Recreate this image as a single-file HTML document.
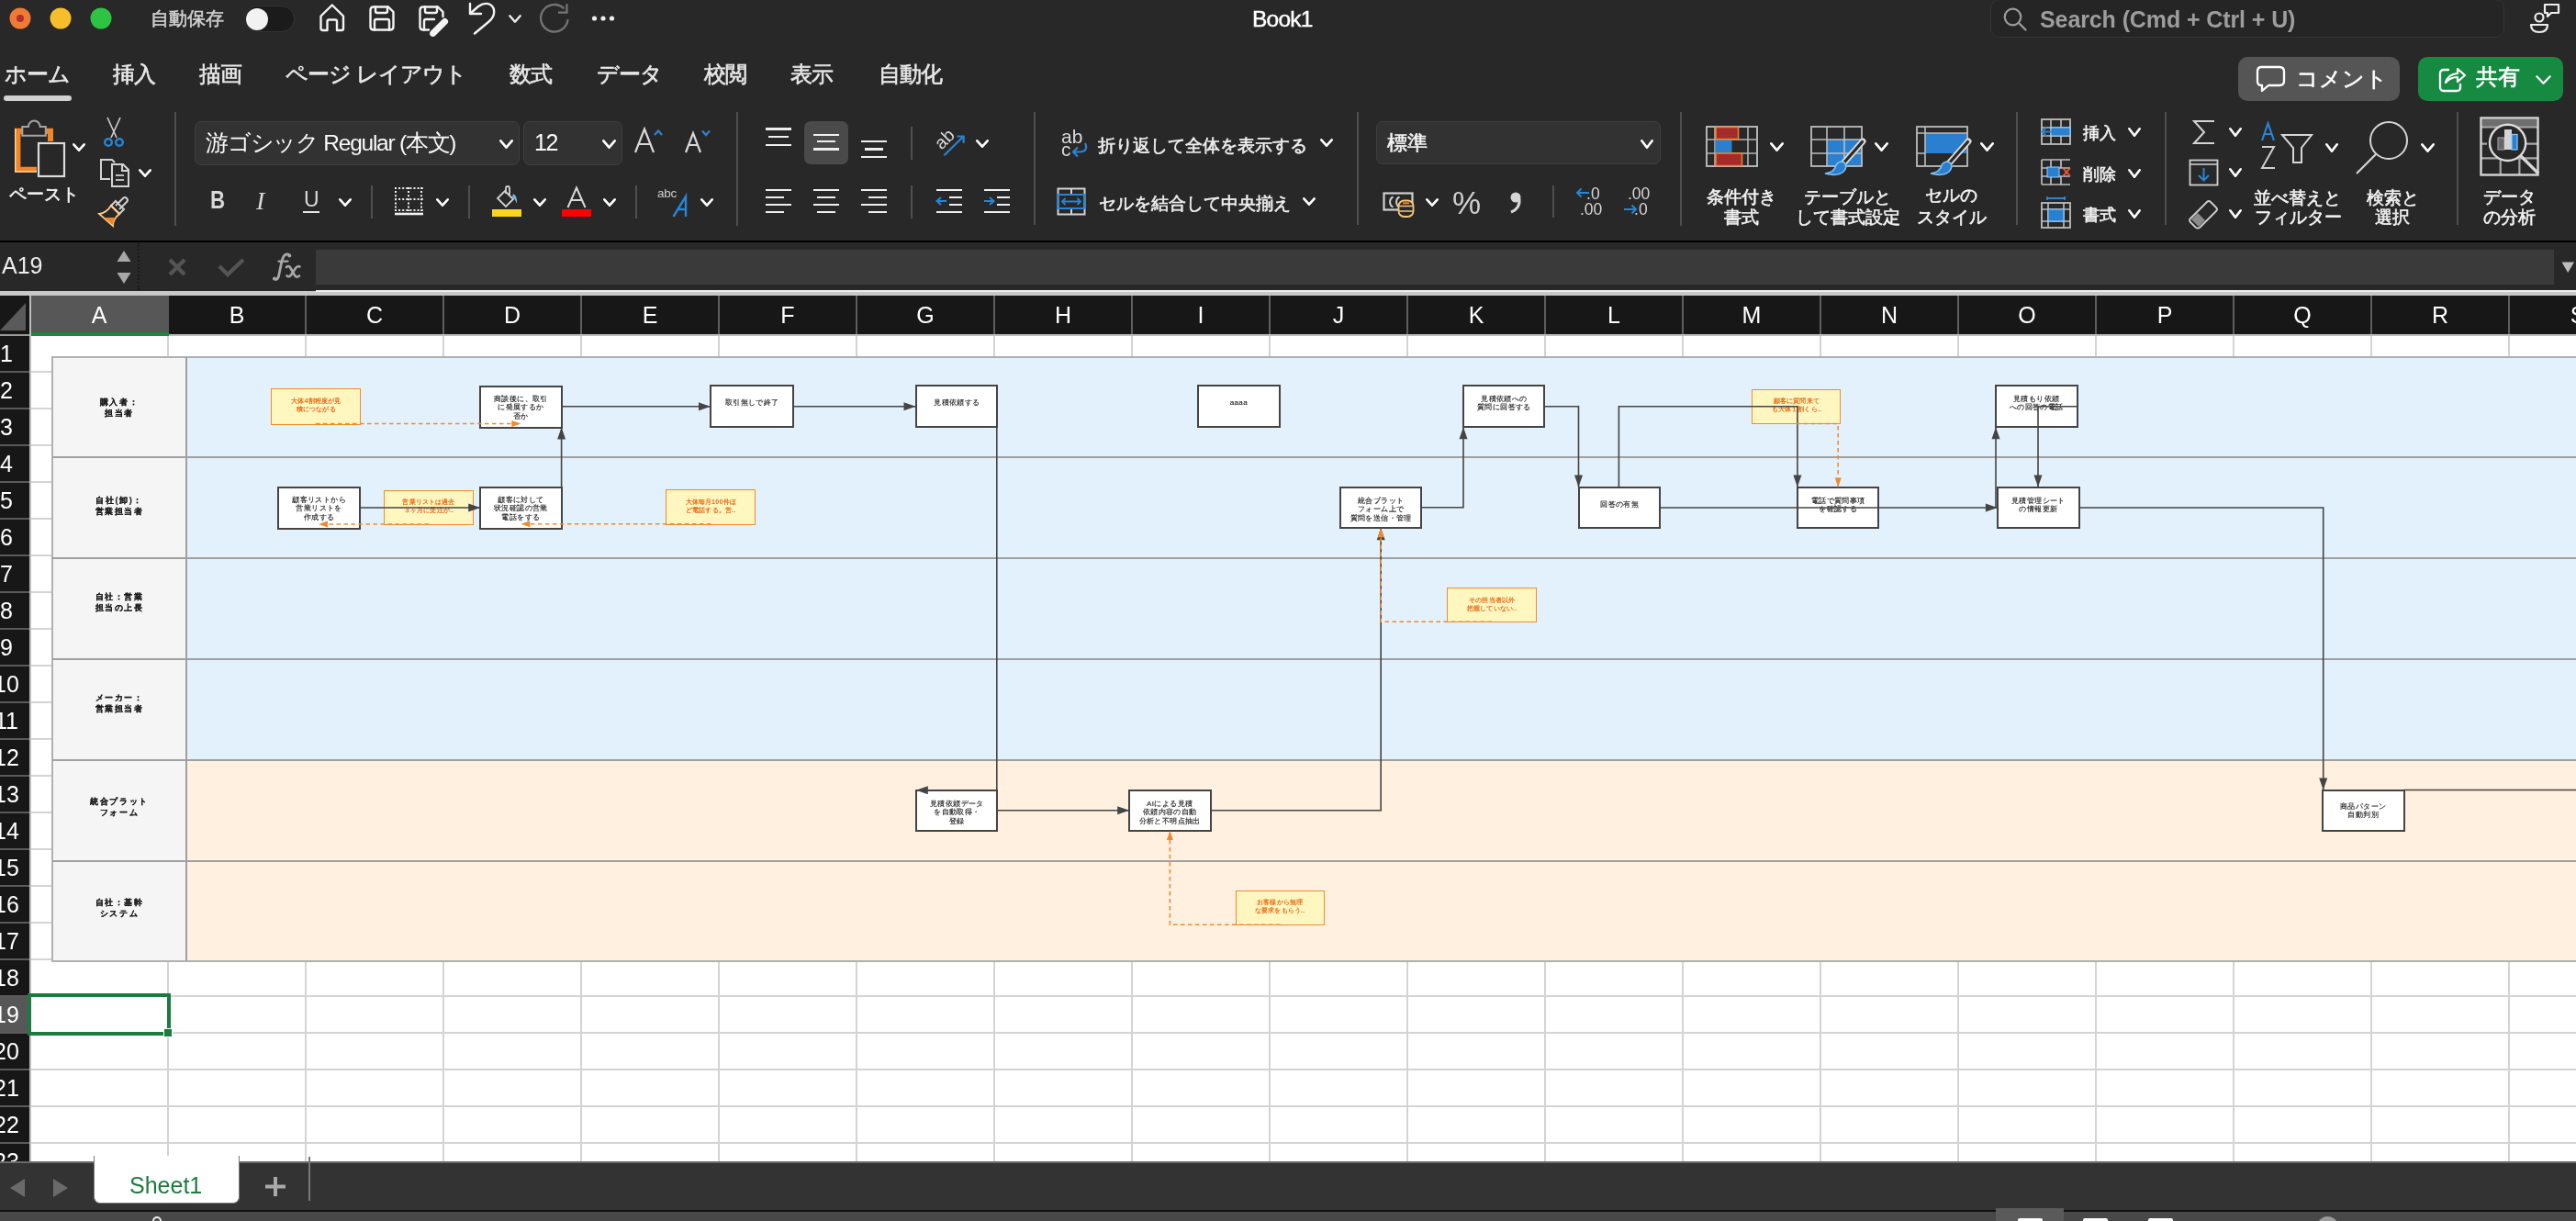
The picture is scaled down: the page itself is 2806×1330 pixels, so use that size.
<!DOCTYPE html><html lang="ja"><head><meta charset="utf-8"><style>
*{box-sizing:border-box}
body{margin:0;width:2806px;height:1330px;overflow:hidden;background:#282828;position:relative;font-family:"Liberation Sans",sans-serif;color:#eee}
.a{position:absolute}
.t{position:absolute;white-space:nowrap;line-height:1;will-change:transform}
svg{position:absolute;overflow:visible}
</style></head><body>
<div class="a" style="left:0;top:262px;width:2806px;height:2px;background:#000"></div>
<div class="a" style="left:344px;top:272px;width:2438px;height:38px;background:#3a3a3a"></div>
<div class="a" style="left:0;top:317px;width:2806px;height:5px;background:#c8c8c8"></div>
<div class="a" style="left:344px;top:316px;width:2462px;height:2px;background:#eee"></div>
<div class="a" style="left:0;top:322px;width:2806px;height:42px;background:#171717"></div>
<div class="a" style="left:34px;top:322px;width:150px;height:42px;background:#575757"></div>
<div class="a" style="left:34px;top:364px;width:2772px;height:2px;background:#bdbdbd"></div>
<div class="a" style="left:0;top:364px;width:34px;height:2px;background:#999"></div>
<div class="a" style="left:34px;top:362px;width:150px;height:4px;background:#178a3e"></div>
<svg style="left:0;top:330px" width="28" height="30"><polygon points="28,0 28,30 0,30" fill="#5a5a5a"/></svg>
<div class="a" style="left:34px;top:366px;width:2772px;height:900px;background:#fff"></div>
<div class="a" style="left:0;top:366px;width:32px;height:900px;background:#171717"></div>
<div class="a" style="left:32px;top:322px;width:2px;height:944px;background:#bdbdbd"></div>
<div class="a" style="left:0;top:1086px;width:32px;height:38px;background:#575757"></div>
<div class="a" style="left:182px;top:366px;width:2px;height:900px;background:#d4d4d4"></div>
<div class="a" style="left:332px;top:322px;width:2px;height:42px;background:#5e5e5e"></div>
<div class="a" style="left:332px;top:366px;width:2px;height:900px;background:#d4d4d4"></div>
<div class="a" style="left:482px;top:322px;width:2px;height:42px;background:#5e5e5e"></div>
<div class="a" style="left:482px;top:366px;width:2px;height:900px;background:#d4d4d4"></div>
<div class="a" style="left:632px;top:322px;width:2px;height:42px;background:#5e5e5e"></div>
<div class="a" style="left:632px;top:366px;width:2px;height:900px;background:#d4d4d4"></div>
<div class="a" style="left:782px;top:322px;width:2px;height:42px;background:#5e5e5e"></div>
<div class="a" style="left:782px;top:366px;width:2px;height:900px;background:#d4d4d4"></div>
<div class="a" style="left:932px;top:322px;width:2px;height:42px;background:#5e5e5e"></div>
<div class="a" style="left:932px;top:366px;width:2px;height:900px;background:#d4d4d4"></div>
<div class="a" style="left:1082px;top:322px;width:2px;height:42px;background:#5e5e5e"></div>
<div class="a" style="left:1082px;top:366px;width:2px;height:900px;background:#d4d4d4"></div>
<div class="a" style="left:1232px;top:322px;width:2px;height:42px;background:#5e5e5e"></div>
<div class="a" style="left:1232px;top:366px;width:2px;height:900px;background:#d4d4d4"></div>
<div class="a" style="left:1382px;top:322px;width:2px;height:42px;background:#5e5e5e"></div>
<div class="a" style="left:1382px;top:366px;width:2px;height:900px;background:#d4d4d4"></div>
<div class="a" style="left:1532px;top:322px;width:2px;height:42px;background:#5e5e5e"></div>
<div class="a" style="left:1532px;top:366px;width:2px;height:900px;background:#d4d4d4"></div>
<div class="a" style="left:1682px;top:322px;width:2px;height:42px;background:#5e5e5e"></div>
<div class="a" style="left:1682px;top:366px;width:2px;height:900px;background:#d4d4d4"></div>
<div class="a" style="left:1832px;top:322px;width:2px;height:42px;background:#5e5e5e"></div>
<div class="a" style="left:1832px;top:366px;width:2px;height:900px;background:#d4d4d4"></div>
<div class="a" style="left:1982px;top:322px;width:2px;height:42px;background:#5e5e5e"></div>
<div class="a" style="left:1982px;top:366px;width:2px;height:900px;background:#d4d4d4"></div>
<div class="a" style="left:2132px;top:322px;width:2px;height:42px;background:#5e5e5e"></div>
<div class="a" style="left:2132px;top:366px;width:2px;height:900px;background:#d4d4d4"></div>
<div class="a" style="left:2282px;top:322px;width:2px;height:42px;background:#5e5e5e"></div>
<div class="a" style="left:2282px;top:366px;width:2px;height:900px;background:#d4d4d4"></div>
<div class="a" style="left:2432px;top:322px;width:2px;height:42px;background:#5e5e5e"></div>
<div class="a" style="left:2432px;top:366px;width:2px;height:900px;background:#d4d4d4"></div>
<div class="a" style="left:2582px;top:322px;width:2px;height:42px;background:#5e5e5e"></div>
<div class="a" style="left:2582px;top:366px;width:2px;height:900px;background:#d4d4d4"></div>
<div class="a" style="left:2732px;top:322px;width:2px;height:42px;background:#5e5e5e"></div>
<div class="a" style="left:2732px;top:366px;width:2px;height:900px;background:#d4d4d4"></div>
<div class="a" style="left:34px;top:404px;width:2772px;height:2px;background:#d4d4d4"></div>
<div class="a" style="left:0;top:404px;width:32px;height:2px;background:#5a5a5a"></div>
<div class="a" style="left:34px;top:444px;width:2772px;height:2px;background:#d4d4d4"></div>
<div class="a" style="left:0;top:444px;width:32px;height:2px;background:#5a5a5a"></div>
<div class="a" style="left:34px;top:484px;width:2772px;height:2px;background:#d4d4d4"></div>
<div class="a" style="left:0;top:484px;width:32px;height:2px;background:#5a5a5a"></div>
<div class="a" style="left:34px;top:524px;width:2772px;height:2px;background:#d4d4d4"></div>
<div class="a" style="left:0;top:524px;width:32px;height:2px;background:#5a5a5a"></div>
<div class="a" style="left:34px;top:564px;width:2772px;height:2px;background:#d4d4d4"></div>
<div class="a" style="left:0;top:564px;width:32px;height:2px;background:#5a5a5a"></div>
<div class="a" style="left:34px;top:604px;width:2772px;height:2px;background:#d4d4d4"></div>
<div class="a" style="left:0;top:604px;width:32px;height:2px;background:#5a5a5a"></div>
<div class="a" style="left:34px;top:644px;width:2772px;height:2px;background:#d4d4d4"></div>
<div class="a" style="left:0;top:644px;width:32px;height:2px;background:#5a5a5a"></div>
<div class="a" style="left:34px;top:684px;width:2772px;height:2px;background:#d4d4d4"></div>
<div class="a" style="left:0;top:684px;width:32px;height:2px;background:#5a5a5a"></div>
<div class="a" style="left:34px;top:724px;width:2772px;height:2px;background:#d4d4d4"></div>
<div class="a" style="left:0;top:724px;width:32px;height:2px;background:#5a5a5a"></div>
<div class="a" style="left:34px;top:764px;width:2772px;height:2px;background:#d4d4d4"></div>
<div class="a" style="left:0;top:764px;width:32px;height:2px;background:#5a5a5a"></div>
<div class="a" style="left:34px;top:804px;width:2772px;height:2px;background:#d4d4d4"></div>
<div class="a" style="left:0;top:804px;width:32px;height:2px;background:#5a5a5a"></div>
<div class="a" style="left:34px;top:844px;width:2772px;height:2px;background:#d4d4d4"></div>
<div class="a" style="left:0;top:844px;width:32px;height:2px;background:#5a5a5a"></div>
<div class="a" style="left:34px;top:884px;width:2772px;height:2px;background:#d4d4d4"></div>
<div class="a" style="left:0;top:884px;width:32px;height:2px;background:#5a5a5a"></div>
<div class="a" style="left:34px;top:924px;width:2772px;height:2px;background:#d4d4d4"></div>
<div class="a" style="left:0;top:924px;width:32px;height:2px;background:#5a5a5a"></div>
<div class="a" style="left:34px;top:964px;width:2772px;height:2px;background:#d4d4d4"></div>
<div class="a" style="left:0;top:964px;width:32px;height:2px;background:#5a5a5a"></div>
<div class="a" style="left:34px;top:1004px;width:2772px;height:2px;background:#d4d4d4"></div>
<div class="a" style="left:0;top:1004px;width:32px;height:2px;background:#5a5a5a"></div>
<div class="a" style="left:34px;top:1044px;width:2772px;height:2px;background:#d4d4d4"></div>
<div class="a" style="left:0;top:1044px;width:32px;height:2px;background:#5a5a5a"></div>
<div class="a" style="left:34px;top:1084px;width:2772px;height:2px;background:#d4d4d4"></div>
<div class="a" style="left:0;top:1084px;width:32px;height:2px;background:#5a5a5a"></div>
<div class="a" style="left:34px;top:1124px;width:2772px;height:2px;background:#d4d4d4"></div>
<div class="a" style="left:0;top:1124px;width:32px;height:2px;background:#5a5a5a"></div>
<div class="a" style="left:34px;top:1164px;width:2772px;height:2px;background:#d4d4d4"></div>
<div class="a" style="left:0;top:1164px;width:32px;height:2px;background:#5a5a5a"></div>
<div class="a" style="left:34px;top:1204px;width:2772px;height:2px;background:#d4d4d4"></div>
<div class="a" style="left:0;top:1204px;width:32px;height:2px;background:#5a5a5a"></div>
<div class="a" style="left:34px;top:1244px;width:2772px;height:2px;background:#d4d4d4"></div>
<div class="a" style="left:0;top:1244px;width:32px;height:2px;background:#5a5a5a"></div>
<div class="t" style="left:68px;width:80px;text-align:center;top:331px;font-size:25px;color:#fff">A</div>
<div class="t" style="left:218px;width:80px;text-align:center;top:331px;font-size:25px;color:#fff">B</div>
<div class="t" style="left:368px;width:80px;text-align:center;top:331px;font-size:25px;color:#fff">C</div>
<div class="t" style="left:518px;width:80px;text-align:center;top:331px;font-size:25px;color:#fff">D</div>
<div class="t" style="left:668px;width:80px;text-align:center;top:331px;font-size:25px;color:#fff">E</div>
<div class="t" style="left:818px;width:80px;text-align:center;top:331px;font-size:25px;color:#fff">F</div>
<div class="t" style="left:968px;width:80px;text-align:center;top:331px;font-size:25px;color:#fff">G</div>
<div class="t" style="left:1118px;width:80px;text-align:center;top:331px;font-size:25px;color:#fff">H</div>
<div class="t" style="left:1268px;width:80px;text-align:center;top:331px;font-size:25px;color:#fff">I</div>
<div class="t" style="left:1418px;width:80px;text-align:center;top:331px;font-size:25px;color:#fff">J</div>
<div class="t" style="left:1568px;width:80px;text-align:center;top:331px;font-size:25px;color:#fff">K</div>
<div class="t" style="left:1718px;width:80px;text-align:center;top:331px;font-size:25px;color:#fff">L</div>
<div class="t" style="left:1868px;width:80px;text-align:center;top:331px;font-size:25px;color:#fff">M</div>
<div class="t" style="left:2018px;width:80px;text-align:center;top:331px;font-size:25px;color:#fff">N</div>
<div class="t" style="left:2168px;width:80px;text-align:center;top:331px;font-size:25px;color:#fff">O</div>
<div class="t" style="left:2318px;width:80px;text-align:center;top:331px;font-size:25px;color:#fff">P</div>
<div class="t" style="left:2468px;width:80px;text-align:center;top:331px;font-size:25px;color:#fff">Q</div>
<div class="t" style="left:2618px;width:80px;text-align:center;top:331px;font-size:25px;color:#fff">R</div>
<div class="t" style="left:2768px;width:80px;text-align:center;top:331px;font-size:25px;color:#fff">S</div>
<div class="t" style="left:-33px;width:80px;text-align:center;top:372.5px;font-size:25px;color:#fff">1</div>
<div class="t" style="left:-33px;width:80px;text-align:center;top:412.5px;font-size:25px;color:#fff">2</div>
<div class="t" style="left:-33px;width:80px;text-align:center;top:452.5px;font-size:25px;color:#fff">3</div>
<div class="t" style="left:-33px;width:80px;text-align:center;top:492.5px;font-size:25px;color:#fff">4</div>
<div class="t" style="left:-33px;width:80px;text-align:center;top:532.5px;font-size:25px;color:#fff">5</div>
<div class="t" style="left:-33px;width:80px;text-align:center;top:572.5px;font-size:25px;color:#fff">6</div>
<div class="t" style="left:-33px;width:80px;text-align:center;top:612.5px;font-size:25px;color:#fff">7</div>
<div class="t" style="left:-33px;width:80px;text-align:center;top:652.5px;font-size:25px;color:#fff">8</div>
<div class="t" style="left:-33px;width:80px;text-align:center;top:692.5px;font-size:25px;color:#fff">9</div>
<div class="t" style="left:-33px;width:80px;text-align:center;top:732.5px;font-size:25px;color:#fff">10</div>
<div class="t" style="left:-33px;width:80px;text-align:center;top:772.5px;font-size:25px;color:#fff">11</div>
<div class="t" style="left:-33px;width:80px;text-align:center;top:812.5px;font-size:25px;color:#fff">12</div>
<div class="t" style="left:-33px;width:80px;text-align:center;top:852.5px;font-size:25px;color:#fff">13</div>
<div class="t" style="left:-33px;width:80px;text-align:center;top:892.5px;font-size:25px;color:#fff">14</div>
<div class="t" style="left:-33px;width:80px;text-align:center;top:932.5px;font-size:25px;color:#fff">15</div>
<div class="t" style="left:-33px;width:80px;text-align:center;top:972.5px;font-size:25px;color:#fff">16</div>
<div class="t" style="left:-33px;width:80px;text-align:center;top:1012.5px;font-size:25px;color:#fff">17</div>
<div class="t" style="left:-33px;width:80px;text-align:center;top:1052.5px;font-size:25px;color:#fff">18</div>
<div class="t" style="left:-33px;width:80px;text-align:center;top:1092.5px;font-size:25px;color:#fff">19</div>
<div class="t" style="left:-33px;width:80px;text-align:center;top:1132.5px;font-size:25px;color:#fff">20</div>
<div class="t" style="left:-33px;width:80px;text-align:center;top:1172.5px;font-size:25px;color:#fff">21</div>
<div class="t" style="left:-33px;width:80px;text-align:center;top:1212.5px;font-size:25px;color:#fff">22</div>
<div class="t" style="left:-33px;width:80px;text-align:center;top:1252.5px;font-size:25px;color:#fff">23</div>
<div class="a" style="left:56.5px;top:388.6px;width:2749.5px;height:658.8000000000001px;background:#f5f5f5"></div>
<div class="a" style="left:203px;top:388.6px;width:2603px;height:109.79999999999995px;background:#e3f1fc"></div>
<div class="a" style="left:203px;top:498.4px;width:2603px;height:109.80000000000007px;background:#e3f1fc"></div>
<div class="a" style="left:203px;top:608.2px;width:2603px;height:109.79999999999995px;background:#e3f1fc"></div>
<div class="a" style="left:203px;top:718px;width:2603px;height:109.79999999999995px;background:#e3f1fc"></div>
<div class="a" style="left:203px;top:827.8px;width:2603px;height:109.80000000000007px;background:#fff0df"></div>
<div class="a" style="left:203px;top:937.6px;width:2603px;height:109.80000000000007px;background:#fff0df"></div>
<div class="a" style="left:55.5px;top:387.6px;width:2750.5px;height:660.8000000000001px;border:2px solid #b0b0b0;border-right:none"></div>
<div class="a" style="left:56.5px;top:497.4px;width:2749.5px;height:2px;background:#a0a0a0"></div>
<div class="a" style="left:56.5px;top:607.2px;width:2749.5px;height:2px;background:#a0a0a0"></div>
<div class="a" style="left:56.5px;top:717px;width:2749.5px;height:2px;background:#a0a0a0"></div>
<div class="a" style="left:56.5px;top:826.8px;width:2749.5px;height:2px;background:#a0a0a0"></div>
<div class="a" style="left:56.5px;top:936.6px;width:2749.5px;height:2px;background:#a0a0a0"></div>
<div class="a" style="left:202px;top:388.6px;width:2px;height:658.8000000000001px;background:#a0a0a0"></div>
<div class="t" style="left:56.5px;width:146.1px;top:431.7px;text-align:center;font-size:9.1px;line-height:12px;font-weight:bold;color:#1a1a1a;letter-spacing:1.6px;-webkit-text-stroke:0.12px #1a1a1a">購入者：<br>担当者</div>
<div class="t" style="left:56.5px;width:146.1px;top:539.0px;text-align:center;font-size:9.1px;line-height:12px;font-weight:bold;color:#1a1a1a;letter-spacing:1.6px;-webkit-text-stroke:0.12px #1a1a1a">自社(卸)：<br>営業担当者</div>
<div class="t" style="left:56.5px;width:146.1px;top:644.3000000000001px;text-align:center;font-size:9.1px;line-height:12px;font-weight:bold;color:#1a1a1a;letter-spacing:1.6px;-webkit-text-stroke:0.12px #1a1a1a">自社：営業<br>担当の上長</div>
<div class="t" style="left:56.5px;width:146.1px;top:754.1px;text-align:center;font-size:9.1px;line-height:12px;font-weight:bold;color:#1a1a1a;letter-spacing:1.6px;-webkit-text-stroke:0.12px #1a1a1a">メーカー：<br>営業担当者</div>
<div class="t" style="left:56.5px;width:146.1px;top:866.9000000000001px;text-align:center;font-size:9.1px;line-height:12px;font-weight:bold;color:#1a1a1a;letter-spacing:1.6px;-webkit-text-stroke:0.12px #1a1a1a">統合プラット<br>フォーム</div>
<div class="t" style="left:56.5px;width:146.1px;top:977.4000000000001px;text-align:center;font-size:9.1px;line-height:12px;font-weight:bold;color:#1a1a1a;letter-spacing:1.6px;-webkit-text-stroke:0.12px #1a1a1a">自社：基幹<br>システム</div>
<div class="a" style="left:522.2px;top:419.5px;width:90.89999999999998px;height:47.0px;background:#fff;border:2px solid #444"></div>
<div class="t" style="left:513.2px;width:108.89999999999998px;top:430.4px;text-align:center;font-size:8px;line-height:9.3px;color:#222;letter-spacing:0.4px;-webkit-text-stroke:0.15px #222">商談後に、取引<br>に発展するか<br>否か</div>
<div class="a" style="left:773.1px;top:419.2px;width:92.29999999999995px;height:47.19999999999999px;background:#fff;border:2px solid #444"></div>
<div class="t" style="left:764.1px;width:110.29999999999995px;top:434.2px;text-align:center;font-size:8px;line-height:9.3px;color:#222;letter-spacing:0.4px;-webkit-text-stroke:0.15px #222">取引無しで終了</div>
<div class="a" style="left:996.5px;top:419.2px;width:90.70000000000005px;height:47.19999999999999px;background:#fff;border:2px solid #444"></div>
<div class="t" style="left:987.5px;width:108.70000000000005px;top:434.2px;text-align:center;font-size:8px;line-height:9.3px;color:#222;letter-spacing:0.4px;-webkit-text-stroke:0.15px #222">見積依頼する</div>
<div class="a" style="left:1304.2px;top:419.2px;width:90.70000000000005px;height:47.19999999999999px;background:#fff;border:2px solid #444"></div>
<div class="t" style="left:1295.2px;width:108.70000000000005px;top:434.2px;text-align:center;font-size:8px;line-height:9.3px;color:#222;letter-spacing:0.4px;-webkit-text-stroke:0.15px #222">aaaa</div>
<div class="a" style="left:1592.6px;top:419.2px;width:90.70000000000005px;height:47.0px;background:#fff;border:2px solid #444"></div>
<div class="t" style="left:1583.6px;width:108.70000000000005px;top:430.09999999999997px;text-align:center;font-size:8px;line-height:9.3px;color:#222;letter-spacing:0.4px;-webkit-text-stroke:0.15px #222">見積依頼への<br>質問に回答する</div>
<div class="a" style="left:2173.3px;top:419.2px;width:90.29999999999973px;height:47.0px;background:#fff;border:2px solid #444"></div>
<div class="t" style="left:2164.3px;width:108.29999999999973px;top:430.09999999999997px;text-align:center;font-size:8px;line-height:9.3px;color:#222;letter-spacing:0.4px;-webkit-text-stroke:0.15px #222">見積もり依頼<br>への回答の電話</div>
<div class="a" style="left:302px;top:529.5px;width:91.19999999999999px;height:47.10000000000002px;background:#fff;border:2px solid #444"></div>
<div class="t" style="left:293px;width:109.19999999999999px;top:540.4px;text-align:center;font-size:8px;line-height:9.3px;color:#222;letter-spacing:0.4px;-webkit-text-stroke:0.15px #222">顧客リストから<br>営業リストを<br>作成する</div>
<div class="a" style="left:522.2px;top:529.5px;width:90.79999999999995px;height:47.10000000000002px;background:#fff;border:2px solid #444"></div>
<div class="t" style="left:513.2px;width:108.79999999999995px;top:540.4px;text-align:center;font-size:8px;line-height:9.3px;color:#222;letter-spacing:0.4px;-webkit-text-stroke:0.15px #222">顧客に対して<br>状況確認の営業<br>電話をする</div>
<div class="a" style="left:1458.9px;top:529.6px;width:90.5px;height:46.69999999999993px;background:#fff;border:2px solid #444"></div>
<div class="t" style="left:1449.9px;width:108.5px;top:540.5px;text-align:center;font-size:8px;line-height:9.3px;color:#222;letter-spacing:0.4px;-webkit-text-stroke:0.15px #222">統合プラット<br>フォーム上で<br>質問を送信・管理</div>
<div class="a" style="left:1718.5px;top:529.6px;width:90.40000000000009px;height:46.69999999999993px;background:#fff;border:2px solid #444"></div>
<div class="t" style="left:1709.5px;width:108.40000000000009px;top:544.6px;text-align:center;font-size:8px;line-height:9.3px;color:#222;letter-spacing:0.4px;-webkit-text-stroke:0.15px #222">回答の有無</div>
<div class="a" style="left:1956.9px;top:529.6px;width:90.29999999999995px;height:46.69999999999993px;background:#fff;border:2px solid #444"></div>
<div class="t" style="left:1947.9px;width:108.29999999999995px;top:540.5px;text-align:center;font-size:8px;line-height:9.3px;color:#222;letter-spacing:0.4px;-webkit-text-stroke:0.15px #222">電話で質問事項<br>を確認する</div>
<div class="a" style="left:2174.9px;top:529.6px;width:90.69999999999982px;height:46.69999999999993px;background:#fff;border:2px solid #444"></div>
<div class="t" style="left:2165.9px;width:108.69999999999982px;top:540.5px;text-align:center;font-size:8px;line-height:9.3px;color:#222;letter-spacing:0.4px;-webkit-text-stroke:0.15px #222">見積管理シート<br>の情報更新</div>
<div class="a" style="left:996.8px;top:859.8px;width:90.70000000000005px;height:46.200000000000045px;background:#fff;border:2px solid #444"></div>
<div class="t" style="left:987.8px;width:108.70000000000005px;top:870.6999999999999px;text-align:center;font-size:8px;line-height:9.3px;color:#222;letter-spacing:0.4px;-webkit-text-stroke:0.15px #222">見積依頼データ<br>を自動取得・<br>登録</div>
<div class="a" style="left:1229.2px;top:859.8px;width:90.5px;height:46.200000000000045px;background:#fff;border:2px solid #444"></div>
<div class="t" style="left:1220.2px;width:108.5px;top:870.6999999999999px;text-align:center;font-size:8px;line-height:9.3px;color:#222;letter-spacing:0.4px;-webkit-text-stroke:0.15px #222">AIによる見積<br>依頼内容の自動<br>分析と不明点抽出</div>
<div class="a" style="left:2529px;top:859.5px;width:90.5px;height:46.299999999999955px;background:#fff;border:2px solid #444"></div>
<div class="t" style="left:2520px;width:108.5px;top:873.5px;text-align:center;font-size:8px;line-height:9.3px;color:#222;letter-spacing:0.4px;-webkit-text-stroke:0.15px #222">商品パターン<br>自動判別</div>
<div class="a" style="left:295.25px;top:423.45px;width:98.19999999999999px;height:39.19999999999999px;background:#fff6c0;border:1.6px solid #f28b2c"></div>
<div class="t" style="left:286px;width:116.69999999999999px;top:432.09999999999997px;text-align:center;font-size:7.2px;line-height:9.3px;font-weight:bold;color:#e8701a;letter-spacing:0.15px">大体4割程度が見<br>積につながる</div>
<div class="a" style="left:418.15px;top:533.55px;width:97.60000000000002px;height:38.80000000000007px;background:#fff6c0;border:1.6px solid #f28b2c"></div>
<div class="t" style="left:408.9px;width:116.10000000000002px;top:542.1999999999999px;text-align:center;font-size:7.2px;line-height:9.3px;font-weight:bold;color:#e8701a;letter-spacing:0.15px">営業リストは過去<br>３ヶ月に受注が..</div>
<div class="a" style="left:725.45px;top:533.15px;width:97.89999999999998px;height:39.200000000000045px;background:#fff6c0;border:1.6px solid #f28b2c"></div>
<div class="t" style="left:716.2px;width:116.39999999999998px;top:541.8px;text-align:center;font-size:7.2px;line-height:9.3px;font-weight:bold;color:#e8701a;letter-spacing:0.15px">大体毎月100件ほ<br>ど電話する。営..</div>
<div class="a" style="left:1908.05px;top:423.55px;width:97.20000000000005px;height:38.89999999999998px;background:#fff6c0;border:1.6px solid #f28b2c"></div>
<div class="t" style="left:1898.8px;width:115.70000000000005px;top:432.2px;text-align:center;font-size:7.2px;line-height:9.3px;font-weight:bold;color:#e8701a;letter-spacing:0.15px">顧客に質問来て<br>も大体１割くら..</div>
<div class="a" style="left:1576.25px;top:640.05px;width:97.79999999999995px;height:38.200000000000045px;background:#fff6c0;border:1.6px solid #f28b2c"></div>
<div class="t" style="left:1567px;width:116.29999999999995px;top:648.6999999999999px;text-align:center;font-size:7.2px;line-height:9.3px;font-weight:bold;color:#e8701a;letter-spacing:0.15px">その担当者以外<br>把握していない..</div>
<div class="a" style="left:1345.55px;top:969.65px;width:97.90000000000009px;height:38.80000000000007px;background:#fff6c0;border:1.6px solid #f28b2c"></div>
<div class="t" style="left:1336.3px;width:116.40000000000009px;top:978.3px;text-align:center;font-size:7.2px;line-height:9.3px;font-weight:bold;color:#e8701a;letter-spacing:0.15px">お客様から無理<br>な要求をもらう..</div>
<svg style="left:0;top:0" width="2806" height="1330">
<polyline points="392.2,553 523.2,553" fill="none" stroke="#444" stroke-width="1.6"/>
<polygon points="523.2,553 510.20000000000005,548.5 510.20000000000005,557.5" fill="#444"/>
<polyline points="611.6,530.5 611.6,465.5" fill="none" stroke="#444" stroke-width="1.6"/>
<polygon points="611.6,465.5 607.1,478.5 616.1,478.5" fill="#444"/>
<polyline points="612,442.8 774,442.8" fill="none" stroke="#444" stroke-width="1.6"/>
<polygon points="774,442.8 761,438.3 761,447.3" fill="#444"/>
<polyline points="864.4,442.8 997.5,442.8" fill="none" stroke="#444" stroke-width="1.6"/>
<polygon points="997.5,442.8 984.5,438.3 984.5,447.3" fill="#444"/>
<polyline points="1085.8,442.7 1085.8,860.8 997.8,860.8" fill="none" stroke="#444" stroke-width="1.6"/>
<polygon points="997.8,860.8 1010.8,856.3 1010.8,865.3" fill="#444"/>
<polyline points="1086.5,882.7 1230.2,882.7" fill="none" stroke="#444" stroke-width="1.6"/>
<polygon points="1230.2,882.7 1217.2,878.2 1217.2,887.2" fill="#444"/>
<polyline points="1318.7,882.7 1504.2,882.7 1504.2,575.3" fill="none" stroke="#444" stroke-width="1.6"/>
<polygon points="1504.2,575.3 1499.7,588.3 1508.7,588.3" fill="#444"/>
<polyline points="1548.4,552.8 1594,552.8 1594,465" fill="none" stroke="#444" stroke-width="1.6"/>
<polygon points="1594,465.2 1589.5,478.2 1598.5,478.2" fill="#444"/>
<polyline points="1682.3,442.7 1719.5,442.7 1719.5,530.6" fill="none" stroke="#444" stroke-width="1.6"/>
<polygon points="1719.5,530.6 1715.0,517.6 1724.0,517.6" fill="#444"/>
<polyline points="1763.4,530.6 1763.4,442.7 1957.9,442.7 1957.9,530.6" fill="none" stroke="#444" stroke-width="1.6"/>
<polygon points="1957.9,530.6 1953.4,517.6 1962.4,517.6" fill="#444"/>
<polyline points="1807.9,553 2175.9,553" fill="none" stroke="#444" stroke-width="1.6"/>
<polygon points="2175.9,553 2162.9,548.5 2162.9,557.5" fill="#444"/>
<polyline points="2174,553 2174,465.2" fill="none" stroke="#444" stroke-width="1.6"/>
<polygon points="2174,465.2 2169.5,478.2 2178.5,478.2" fill="#444"/>
<polyline points="2262.6,442.7 2220,442.7 2220,530.6" fill="none" stroke="#444" stroke-width="1.6"/>
<polygon points="2220,530.6 2215.5,517.6 2224.5,517.6" fill="#444"/>
<polyline points="2264.6,553 2530.7,553 2530.7,860.5" fill="none" stroke="#444" stroke-width="1.6"/>
<polygon points="2530.7,860.5 2526.2,847.5 2535.2,847.5" fill="#444"/>
<polyline points="2618.5,860.5 2806,860.5" fill="none" stroke="#444" stroke-width="1.6"/>
<polyline points="344,461.5 567.4,461.5" fill="none" stroke="#f08a30" stroke-width="1.6" stroke-dasharray="4.5,3.5"/>
<polygon points="567.4,461.5 557.4,458.0 557.4,465.0" fill="#f08a30"/>
<polyline points="774.4,570.8 567.4,570.8" fill="none" stroke="#f08a30" stroke-width="1.6" stroke-dasharray="4.5,3.5"/>
<polygon points="567.4,570.8 577.4,567.3 577.4,574.3" fill="#f08a30"/>
<polyline points="467,571 347,571" fill="none" stroke="#f08a30" stroke-width="1.6" stroke-dasharray="4.5,3.5"/>
<polygon points="347,571 357,567.5 357,574.5" fill="#f08a30"/>
<polyline points="1956.6,461.5 2002.2,461.5 2002.2,530.6" fill="none" stroke="#f08a30" stroke-width="1.6" stroke-dasharray="4.5,3.5"/>
<polygon points="2002.2,530.6 1998.7,520.6 2005.7,520.6" fill="#f08a30"/>
<polyline points="1625,677.3 1504.2,677.3 1504.2,575.3" fill="none" stroke="#f08a30" stroke-width="1.6" stroke-dasharray="4.5,3.5"/>
<polygon points="1504.2,575.3 1500.7,585.3 1507.7,585.3" fill="#f08a30"/>
<polyline points="1394.5,1007.3 1274.4,1007.3 1274.4,905" fill="none" stroke="#f08a30" stroke-width="1.6" stroke-dasharray="4.5,3.5"/>
<polygon points="1274.4,905 1270.9,915 1277.9,915" fill="#f08a30"/>
</svg>
<svg style="left:10px;top:8px" width="24" height="24" viewBox="0 0 24 24"><circle cx="12" cy="12" r="11.5" fill="#ee7a34"/><circle cx="12" cy="12" r="4" fill="#b22f2a"/></svg>
<svg style="left:54px;top:8px" width="24" height="24" viewBox="0 0 24 24"><circle cx="12" cy="12" r="11.5" fill="#f7bd2b"/></svg>
<svg style="left:98px;top:8px" width="24" height="24" viewBox="0 0 24 24"><circle cx="12" cy="12" r="11.5" fill="#2dc444"/></svg>
<div class="t" style="left:164px;top:11px;font-size:19.5px;color:#cfcfcf;font-weight:normal;-webkit-text-stroke:0.6px #cfcfcf;">自動保存</div>
<div class="a" style="left:266px;top:6px;width:55px;height:29px;border-radius:15px;background:#1b1b1b;border:1px solid #343434"></div>
<svg style="left:267px;top:8px" width="26" height="26" viewBox="0 0 26 26"><circle cx="13" cy="13" r="12" fill="#f2f2f2"/></svg>
<svg style="left:348px;top:4px" width="28" height="31" viewBox="0 0 28 31"><path d="M1.5,13.5 L13.8,1.5 L26,13.5 V27 Q26,29 24,29 H19 V19.5 Q19,17.5 17,17.5 H10.5 Q8.5,17.5 8.5,19.5 V29 H3.5 Q1.5,29 1.5,27 Z" fill="none" stroke="#f4f4f4" stroke-width="2.4" stroke-linejoin="round" stroke-linecap="round"/></svg>
<svg style="left:402px;top:6px" width="28" height="28" viewBox="0 0 28 28"><path d="M5,1.5 H21 L26.5,7 V23 Q26.5,26.5 23,26.5 H5 Q1.5,26.5 1.5,23 V5 Q1.5,1.5 5,1.5 Z" fill="none" stroke="#f4f4f4" stroke-width="2.4" stroke-linejoin="round" stroke-linecap="round"/><path d="M7,1.5 V6 Q7,8 9,8 H18 Q20,8 20,6 V1.5" fill="none" stroke="#f4f4f4" stroke-width="2.4" stroke-linejoin="round" stroke-linecap="round"/><path d="M6,26.5 V17 Q6,15 8,15 H20 Q22,15 22,17 V26.5" fill="none" stroke="#f4f4f4" stroke-width="2.4" stroke-linejoin="round" stroke-linecap="round"/></svg>
<svg style="left:456px;top:6px" width="32" height="31" viewBox="0 0 32 31"><path d="M11,26.5 H5 Q1.5,26.5 1.5,23 V5 Q1.5,1.5 5,1.5 H21 L26.5,7 V12" fill="none" stroke="#f4f4f4" stroke-width="2.4" stroke-linejoin="round" stroke-linecap="round"/><path d="M7,1.5 V6 Q7,8 9,8 H18 Q20,8 20,6 V1.5" fill="none" stroke="#f4f4f4" stroke-width="2.4" stroke-linejoin="round" stroke-linecap="round"/><path d="M6,26.5 V17 Q6,15 8,15 H17" fill="none" stroke="#f4f4f4" stroke-width="2.4" stroke-linejoin="round" stroke-linecap="round"/><path d="M13,28 L26,15 Q28.5,12.5 31,15 Q33.5,17.5 31,20 L18,33 Q15.5,35 13,33 Q11,30.5 13,28 Z" fill="#f4f4f4"/></svg>
<svg style="left:508px;top:2px" width="34" height="38" viewBox="0 0 34 38"><path d="M4,2 V13 H16" fill="none" stroke="#f4f4f4" stroke-width="2.4" stroke-linejoin="round" stroke-linecap="round"/><path d="M4.5,12.5 L13,5 Q20,0 26,3 Q31,6 30,13 Q29,18 24,22 L9,34.5" fill="none" stroke="#f4f4f4" stroke-width="2.4" stroke-linejoin="round" stroke-linecap="round"/></svg>
<svg style="left:554px;top:16px" width="14" height="10" viewBox="0 0 14 10"><polyline points="1.3,1.3 7.0,7.7 12.7,1.3" fill="none" stroke="#eee" stroke-width="2.4" stroke-linecap="round" stroke-linejoin="round"/></svg>
<svg style="left:588px;top:3px" width="36" height="36" viewBox="0 0 36 36"><path d="M30.6,18.2 A14.8,14.8 0 1 1 26.4,6.4" fill="none" stroke="#747474" stroke-width="2.3"/><path d="M20,10.6 H29.4 V1.2" fill="none" stroke="#747474" stroke-width="2.3"/></svg>
<svg style="left:644px;top:16px" width="28" height="8" viewBox="0 0 28 8"><circle cx="3.5" cy="4" r="2.6" fill="#eee"/><circle cx="13" cy="4" r="2.6" fill="#eee"/><circle cx="22.5" cy="4" r="2.6" fill="#eee"/></svg>
<div class="t" style="left:1364px;top:8.7px;font-size:24.5px;color:#fff;font-weight:normal;letter-spacing:-0.75px;-webkit-text-stroke:0.4px #fff">Book1</div>
<div class="a" style="left:2168px;top:-1px;width:560px;height:42px;border-radius:10px;border:1.5px solid #353535;background:#252525"></div>
<svg style="left:2182px;top:8px" width="26" height="26" viewBox="0 0 26 26"><circle cx="10.5" cy="10.5" r="8.8" fill="none" stroke="#9a9a9a" stroke-width="2.2"/><line x1="17" y1="17" x2="24.5" y2="24.5" stroke="#9a9a9a" stroke-width="2.4" stroke-linecap="round"/></svg>
<div class="t" style="left:2222px;top:9px;font-size:25px;color:#9d9d9d;font-weight:bold;letter-spacing:-0.1px">Search (Cmd + Ctrl + U)</div>
<svg style="left:2754px;top:3px" width="36" height="34" viewBox="0 0 36 34"><circle cx="12" cy="16" r="4.5" fill="none" stroke="#eee" stroke-width="2.2"/><path d="M3,24 H21 Q21,32 12,32 Q3,32 3,24 Z" fill="none" stroke="#eee" stroke-width="2.2" stroke-linejoin="round"/><path d="M18,2 H33 V11 H25 L21,15 V11 H18 Z" fill="none" stroke="#eee" stroke-width="2.2" stroke-linejoin="round"/></svg>
<div class="t" style="left:4.8px;top:69px;font-size:24px;color:#e8e8e8;font-weight:normal;-webkit-text-stroke:0.6px #e8e8e8;letter-spacing:-1px">ホーム</div>
<div class="t" style="left:123px;top:69px;font-size:24px;color:#e8e8e8;font-weight:normal;-webkit-text-stroke:0.6px #e8e8e8;letter-spacing:-1px">挿入</div>
<div class="t" style="left:216.7px;top:69px;font-size:24px;color:#e8e8e8;font-weight:normal;-webkit-text-stroke:0.6px #e8e8e8;letter-spacing:-1px">描画</div>
<div class="t" style="left:311px;top:69px;font-size:24px;color:#e8e8e8;font-weight:normal;-webkit-text-stroke:0.6px #e8e8e8;letter-spacing:-1px">ページ レイアウト</div>
<div class="t" style="left:554.8px;top:69px;font-size:24px;color:#e8e8e8;font-weight:normal;-webkit-text-stroke:0.6px #e8e8e8;letter-spacing:-1px">数式</div>
<div class="t" style="left:649.8px;top:69px;font-size:24px;color:#e8e8e8;font-weight:normal;-webkit-text-stroke:0.6px #e8e8e8;letter-spacing:-1px">データ</div>
<div class="t" style="left:767px;top:69px;font-size:24px;color:#e8e8e8;font-weight:normal;-webkit-text-stroke:0.6px #e8e8e8;letter-spacing:-1px">校閲</div>
<div class="t" style="left:860.6px;top:69px;font-size:24px;color:#e8e8e8;font-weight:normal;-webkit-text-stroke:0.6px #e8e8e8;letter-spacing:-1px">表示</div>
<div class="t" style="left:957px;top:69px;font-size:24px;color:#e8e8e8;font-weight:normal;-webkit-text-stroke:0.6px #e8e8e8;letter-spacing:-1px">自動化</div>
<div class="a" style="left:4px;top:104px;width:74px;height:6px;border-radius:3px;background:#d2d2d2"></div>
<div class="a" style="left:2438px;top:62px;width:176px;height:48px;border-radius:10px;background:#555"></div>
<svg style="left:2457px;top:71px" width="34" height="32" viewBox="0 0 34 32"><path d="M6,2 H26 Q31,2 31,7 V17 Q31,22 26,22 H14 L7,28 V22 H6 Q2,22 2,17 V7 Q2,2 6,2 Z" fill="none" stroke="#fff" stroke-width="2.3" stroke-linejoin="round"/></svg>
<div class="t" style="left:2501px;top:75px;font-size:23.5px;color:#fff;font-weight:normal;-webkit-text-stroke:0.5px #fff">コメント</div>
<div class="a" style="left:2634px;top:62px;width:158px;height:48px;border-radius:10px;background:#178a42"></div>
<svg style="left:2655px;top:71px" width="34" height="30" viewBox="0 0 34 30"><path d="M12,5 H7 Q3,5 3,9 V24 Q3,28 7,28 H21 Q25,28 25,24 V21" fill="none" stroke="#fff" stroke-width="2.3" stroke-linecap="round"/><path d="M9,19 Q11,10 22,9 V4 L30,11 L22,18 V13 Q14,13 9,19 Z" fill="none" stroke="#fff" stroke-width="2.2" stroke-linejoin="round"/></svg>
<div class="t" style="left:2697px;top:72px;font-size:24px;color:#fff;font-weight:normal;-webkit-text-stroke:0.6px #fff">共有</div>
<svg style="left:2762px;top:82px" width="17" height="11" viewBox="0 0 17 11"><polyline points="1.3,1.3 8.5,8.7 15.7,1.3" fill="none" stroke="#fff" stroke-width="2.2" stroke-linecap="round" stroke-linejoin="round"/></svg>
<svg style="left:14px;top:130px" width="60" height="64" viewBox="0 0 60 64"><path d="M2,9.7 H10 V16 H8.4 V51.8 H26 V57.6 H2 Z" fill="#f0862a"/><path d="M36,9.7 H44 V24 H38 V16 H36 Z" fill="#f0862a"/><path d="M2.7,10 V57 H26" fill="none" stroke="#ffd9a0" stroke-width="1.4"/><path d="M10.3,17.7 V8 H16.9 A6.4,6.4 0 0 1 29.7,8 H35.8 V17.7 Z" fill="#282828" stroke="#a4a4a4" stroke-width="2"/><rect x="28" y="26" width="28" height="36" fill="#282828" stroke="#dcdcdc" stroke-width="2.2"/></svg>
<svg style="left:79px;top:156px" width="14" height="10" viewBox="0 0 14 10"><polyline points="1.3,1.3 7.0,7.7 12.7,1.3" fill="none" stroke="#fff" stroke-width="2.6" stroke-linecap="round" stroke-linejoin="round"/></svg>
<div class="t" style="left:10px;top:203px;font-size:18.5px;color:#f2f2f2;font-weight:normal;-webkit-text-stroke:0.6px #f2f2f2;">ペースト</div>
<svg style="left:112px;top:127px" width="24" height="35" viewBox="0 0 24 35"><path d="M5,1 L15,23 M19,1 L9,23" stroke="#cfcfcf" stroke-width="1.6" fill="none"/><circle cx="6" cy="28" r="3.8" fill="none" stroke="#2a84d2" stroke-width="2.4"/><circle cx="18" cy="28" r="3.8" fill="none" stroke="#2a84d2" stroke-width="2.4"/></svg>
<svg style="left:107px;top:171px" width="35" height="35" viewBox="0 0 35 35"><path d="M13,24 H3 V3 H15 L18,6" fill="none" stroke="#d4d4d4" stroke-width="2"/><path d="M15,8 H27 L33,14 V32 H15 Z" fill="#282828" stroke="#d4d4d4" stroke-width="2"/><path d="M26,8 V15 H33" fill="none" stroke="#d4d4d4" stroke-width="2"/><path d="M19,20 H28 M19,25 H28" stroke="#bdbdbd" stroke-width="2"/></svg>
<svg style="left:151px;top:184px" width="14" height="10" viewBox="0 0 14 10"><polyline points="1.3,1.3 7.0,7.7 12.7,1.3" fill="none" stroke="#fff" stroke-width="2.6" stroke-linecap="round" stroke-linejoin="round"/></svg>
<svg style="left:106px;top:214px" width="36" height="34" viewBox="0 0 36 34"><path d="M20,10 L28,2 Q30,0 32,2 Q34,4 32,6 L24,14" fill="none" stroke="#cfcfcf" stroke-width="2"/><path d="M15,10 L20,5 L29,14 L24,19 Z" fill="none" stroke="#cfcfcf" stroke-width="2"/><path d="M2,19 Q10,18 15,10 L24,19 Q17,25 17,32 Z" fill="none" stroke="#ffcf8a" stroke-width="1.8"/><path d="M7,23 L20,23 Q17,27 17,31 Z" fill="#f0862a"/></svg>
<div class="a" style="left:190px;top:122px;width:2px;height:124px;background:#4f4f4f"></div>
<div class="a" style="left:212px;top:132px;width:354px;height:48px;background:#323232;border:1px solid #3f3f3f;border-radius:7px"></div>
<div class="t" style="left:224px;top:144px;font-size:24.5px;color:#fafafa;font-weight:normal;letter-spacing:-1.25px">游ゴシック Regular (本文)</div>
<svg style="left:544px;top:152px" width="15" height="11" viewBox="0 0 15 11"><polyline points="1.3,1.3 7.5,8.7 13.7,1.3" fill="none" stroke="#fff" stroke-width="2.6" stroke-linecap="round" stroke-linejoin="round"/></svg>
<div class="a" style="left:570px;top:132px;width:108px;height:48px;background:#323232;border:1px solid #3f3f3f;border-radius:7px"></div>
<div class="t" style="left:582px;top:143px;font-size:25px;color:#fafafa;font-weight:normal;letter-spacing:-1.5px">12</div>
<svg style="left:656px;top:152px" width="15" height="11" viewBox="0 0 15 11"><polyline points="1.3,1.3 7.5,8.7 13.7,1.3" fill="none" stroke="#fff" stroke-width="2.6" stroke-linecap="round" stroke-linejoin="round"/></svg>
<svg style="left:690px;top:139px" width="34" height="28" viewBox="0 0 34 28"><path d="M2,27 L12,1.5 L22,27 M6,18 H18" fill="none" stroke="#d8d8d8" stroke-width="2.2"/><path d="M23,8 L27,3.5 L31,8" fill="none" stroke="#2a84d2" stroke-width="2.2"/></svg>
<svg style="left:745px;top:139px" width="32" height="28" viewBox="0 0 32 28"><path d="M2,27 L10,6 L18,27 M5,19 H15" fill="none" stroke="#d8d8d8" stroke-width="2.2"/><path d="M20,3.5 L24,8 L28,3.5" fill="none" stroke="#2a84d2" stroke-width="2.2"/></svg>
<div class="t" style="left:229px;top:205px;font-size:27px;color:#d9d9d9;font-weight:bold;transform:scaleX(0.82);transform-origin:0 0">B</div>
<div class="t" style="left:279px;top:205px;font-size:28px;color:#d9d9d9;font-weight:normal;font-family:'Liberation Serif',serif;font-style:italic">I</div>
<div class="t" style="left:331px;top:206px;font-size:23px;color:#d9d9d9;font-weight:normal;">U</div>
<div class="a" style="left:330px;top:230px;width:18px;height:2px;background:#e6e6e6"></div>
<svg style="left:369px;top:216px" width="14" height="10" viewBox="0 0 14 10"><polyline points="1.3,1.3 7.0,7.7 12.7,1.3" fill="none" stroke="#fff" stroke-width="2.6" stroke-linecap="round" stroke-linejoin="round"/></svg>
<div class="a" style="left:404px;top:202px;width:2px;height:36px;background:#4f4f4f"></div>
<svg style="left:430px;top:204px" width="31" height="31" viewBox="0 0 31 31"><path d="M0,1 H31 M0,25 H31 M0,13 H31" stroke="#eee" stroke-width="2" stroke-dasharray="2,2.1"/><path d="M1,0 V26 M29,0 V26 M15,0 V26" stroke="#eee" stroke-width="2" stroke-dasharray="2,2.1"/><path d="M0,29 H31" stroke="#f2f2f2" stroke-width="2.6"/></svg>
<svg style="left:475px;top:216px" width="14" height="10" viewBox="0 0 14 10"><polyline points="1.3,1.3 7.0,7.7 12.7,1.3" fill="none" stroke="#fff" stroke-width="2.6" stroke-linecap="round" stroke-linejoin="round"/></svg>
<div class="a" style="left:510px;top:202px;width:2px;height:36px;background:#4f4f4f"></div>
<svg style="left:538px;top:202px" width="30" height="26" viewBox="0 0 30 26"><path d="M4,14 L12,6 L21,15 L13,23 Z" fill="none" stroke="#d2d2d2" stroke-width="1.8"/><path d="M13,9 V3 Q13,1 15,1 Q17,1 17,3 V11" fill="none" stroke="#d2d2d2" stroke-width="1.8"/><path d="M21,9 Q26,12 25,20 Q23,14 20,13 Z" fill="#7ab8e8"/></svg>
<div class="a" style="left:536px;top:228px;width:32px;height:8px;background:#fdd51f"></div>
<svg style="left:581px;top:216px" width="14" height="10" viewBox="0 0 14 10"><polyline points="1.3,1.3 7.0,7.7 12.7,1.3" fill="none" stroke="#fff" stroke-width="2.6" stroke-linecap="round" stroke-linejoin="round"/></svg>
<svg style="left:617px;top:203px" width="23" height="24" viewBox="0 0 23 24"><path d="M1.5,23 L11,1.5 L20.5,23 M5.5,15 H16.5" fill="none" stroke="#d8d8d8" stroke-width="2"/></svg>
<div class="a" style="left:612px;top:228px;width:32px;height:8px;background:#f00"></div>
<svg style="left:657px;top:216px" width="14" height="10" viewBox="0 0 14 10"><polyline points="1.3,1.3 7.0,7.7 12.7,1.3" fill="none" stroke="#fff" stroke-width="2.6" stroke-linecap="round" stroke-linejoin="round"/></svg>
<div class="a" style="left:692px;top:202px;width:2px;height:36px;background:#4f4f4f"></div>
<div class="t" style="left:716px;top:204px;font-size:13.5px;color:#cfcfcf;font-weight:normal;letter-spacing:-0.3px">abc</div>
<svg style="left:732px;top:213px" width="20" height="24" viewBox="0 0 20 24"><path d="M1.5,23 L15,1 V23 M6,15 H15" fill="none" stroke="#2a84d2" stroke-width="2.4"/></svg>
<svg style="left:763px;top:216px" width="14" height="10" viewBox="0 0 14 10"><polyline points="1.3,1.3 7.0,7.7 12.7,1.3" fill="none" stroke="#fff" stroke-width="2.6" stroke-linecap="round" stroke-linejoin="round"/></svg>
<div class="a" style="left:802px;top:122px;width:2px;height:124px;background:#4f4f4f"></div>
<div class="a" style="left:834px;top:139.4px;width:28px;height:2.2px;background:#eee"></div><div class="a" style="left:837px;top:147.9px;width:22px;height:2.2px;background:#eee"></div><div class="a" style="left:834px;top:156.5px;width:28px;height:2.2px;background:#eee"></div>
<div class="a" style="left:876px;top:132px;width:48px;height:47px;border-radius:7px;background:#4a4a4a"></div>
<div class="a" style="left:886px;top:145.7px;width:28px;height:2.2px;background:#eee"></div><div class="a" style="left:890px;top:153.3px;width:20px;height:2.2px;background:#eee"></div><div class="a" style="left:886px;top:161.4px;width:28px;height:2.2px;background:#eee"></div>
<div class="a" style="left:938px;top:153px;width:28px;height:2.2px;background:#eee"></div><div class="a" style="left:942px;top:161.4px;width:20px;height:2.2px;background:#eee"></div><div class="a" style="left:938px;top:170px;width:28px;height:2.2px;background:#eee"></div>
<div class="a" style="left:992px;top:138px;width:2px;height:36px;background:#4f4f4f"></div>
<svg style="left:1010px;top:135px" width="45" height="40" viewBox="0 0 45 40"><text x="18.6" y="16" text-anchor="middle" dominant-baseline="central" transform="rotate(-45 18.6 16)" font-family="Liberation Sans" font-size="19.5" fill="#d8d8d8">ab</text><path d="M18.4,34.2 L39.6,13.5 M32.4,13.5 H39.6 V20.7" fill="none" stroke="#2a84d2" stroke-width="2.2"/></svg>
<svg style="left:1063px;top:152px" width="14" height="10" viewBox="0 0 14 10"><polyline points="1.3,1.3 7.0,7.7 12.7,1.3" fill="none" stroke="#fff" stroke-width="2.6" stroke-linecap="round" stroke-linejoin="round"/></svg>
<div class="a" style="left:1126px;top:122px;width:2px;height:123px;background:#4f4f4f"></div>
<svg style="left:1150px;top:135px" width="40" height="42" viewBox="0 0 40 42"><text x="6" y="21" font-family="Liberation Sans" font-size="21" fill="#d8d8d8">ab</text><text x="6" y="35" font-family="Liberation Sans" font-size="21" fill="#d8d8d8">c</text><path d="M32,21 Q36,30 26,30.5 H19.5 M24,25.5 L19,30.5 L24,35.5" fill="none" stroke="#2a84d2" stroke-width="2.2"/></svg>
<div class="t" style="left:1196px;top:148.5px;font-size:19.0px;color:#f0f0f0;font-weight:normal;-webkit-text-stroke:0.6px #f0f0f0;">折り返して全体を表示する</div>
<svg style="left:1438px;top:151px" width="14" height="10" viewBox="0 0 14 10"><polyline points="1.3,1.3 7.0,7.7 12.7,1.3" fill="none" stroke="#fff" stroke-width="2.6" stroke-linecap="round" stroke-linejoin="round"/></svg>
<div class="a" style="left:834px;top:205.5px;width:28px;height:2.2px;background:#eee"></div><div class="a" style="left:834px;top:213.6px;width:20px;height:2.2px;background:#eee"></div><div class="a" style="left:834px;top:221.8px;width:28px;height:2.2px;background:#eee"></div><div class="a" style="left:834px;top:230px;width:20px;height:2.2px;background:#eee"></div>
<div class="a" style="left:886px;top:205.5px;width:28px;height:2.2px;background:#eee"></div><div class="a" style="left:890px;top:213.6px;width:20px;height:2.2px;background:#eee"></div><div class="a" style="left:886px;top:221.8px;width:28px;height:2.2px;background:#eee"></div><div class="a" style="left:890px;top:230px;width:20px;height:2.2px;background:#eee"></div>
<div class="a" style="left:938px;top:205.5px;width:28px;height:2.2px;background:#eee"></div><div class="a" style="left:946px;top:213.6px;width:20px;height:2.2px;background:#eee"></div><div class="a" style="left:938px;top:221.8px;width:28px;height:2.2px;background:#eee"></div><div class="a" style="left:946px;top:230px;width:20px;height:2.2px;background:#eee"></div>
<div class="a" style="left:992px;top:202px;width:2px;height:36px;background:#4f4f4f"></div>
<div class="a" style="left:1019.6px;top:205.5px;width:28px;height:2.2px;background:#eee"></div><div class="a" style="left:1019.6px;top:230px;width:28px;height:2.2px;background:#eee"></div>
<div class="a" style="left:1033.6px;top:213.6px;width:14px;height:2.2px;background:#eee"></div><div class="a" style="left:1033.6px;top:221.8px;width:14px;height:2.2px;background:#eee"></div>
<svg style="left:1019px;top:211px" width="13" height="16" viewBox="0 0 13 16"><path d="M12,8 H2 M6,4 L1.5,8 L6,12" fill="none" stroke="#2a84d2" stroke-width="2"/></svg>
<div class="a" style="left:1071.7px;top:205.5px;width:28px;height:2.2px;background:#eee"></div><div class="a" style="left:1071.7px;top:230px;width:28px;height:2.2px;background:#eee"></div>
<div class="a" style="left:1085.7px;top:213.6px;width:14px;height:2.2px;background:#eee"></div><div class="a" style="left:1085.7px;top:221.8px;width:14px;height:2.2px;background:#eee"></div>
<svg style="left:1071px;top:211px" width="13" height="16" viewBox="0 0 13 16"><path d="M1,8 H11 M7,4 L11.5,8 L7,12" fill="none" stroke="#2a84d2" stroke-width="2"/></svg>
<svg style="left:1151px;top:204px" width="32" height="31" viewBox="0 0 32 31"><rect x="1.5" y="1.5" width="29" height="28" fill="none" stroke="#d4d4d4" stroke-width="2"/><path d="M16,1.5 V8 M16,23 V29.5" stroke="#d4d4d4" stroke-width="2"/><rect x="1.5" y="8" width="29" height="15" fill="none" stroke="#2a84d2" stroke-width="2"/><path d="M6,15.5 H26 M9.5,12 L6,15.5 L9.5,19 M22.5,12 L26,15.5 L22.5,19" fill="none" stroke="#2a84d2" stroke-width="1.8"/></svg>
<div class="t" style="left:1196.5px;top:212.5px;font-size:18.8px;color:#f0f0f0;font-weight:normal;-webkit-text-stroke:0.6px #f0f0f0;">セルを結合して中央揃え</div>
<svg style="left:1419px;top:215px" width="14" height="10" viewBox="0 0 14 10"><polyline points="1.3,1.3 7.0,7.7 12.7,1.3" fill="none" stroke="#fff" stroke-width="2.6" stroke-linecap="round" stroke-linejoin="round"/></svg>
<div class="a" style="left:1477.5px;top:122px;width:2px;height:123px;background:#4f4f4f"></div>
<div class="a" style="left:1499px;top:132px;width:310px;height:47px;background:#323232;border:1px solid #3f3f3f;border-radius:7px"></div>
<div class="t" style="left:1511px;top:146px;font-size:21.5px;color:#f2f2f2;font-weight:normal;-webkit-text-stroke:0.6px #f2f2f2;">標準</div>
<svg style="left:1787px;top:152px" width="14" height="11" viewBox="0 0 14 11"><polyline points="1.3,1.3 7.0,8.7 12.7,1.3" fill="none" stroke="#fff" stroke-width="2.6" stroke-linecap="round" stroke-linejoin="round"/></svg>
<svg style="left:1505px;top:209px" width="36" height="28" viewBox="0 0 36 28"><rect x="2.5" y="1.5" width="31" height="18" fill="none" stroke="#d0d0d0" stroke-width="2.2"/><path d="M12.5,5.5 A5,5.8 0 0 0 12.5,16.5 M19.5,5.5 A5,5.8 0 0 0 19.5,16.5" fill="none" stroke="#cfcfcf" stroke-width="2"/><rect x="18.5" y="9.5" width="16" height="17.5" rx="6" fill="#282828" stroke="#f5c77e" stroke-width="1.8"/><path d="M18.5,15.5 H34.5 M18.5,21 H34.5" stroke="#f5c77e" stroke-width="1.6"/><path d="M23,12.3 H30" stroke="#f0862a" stroke-width="2"/></svg>
<svg style="left:1553px;top:216px" width="14" height="10" viewBox="0 0 14 10"><polyline points="1.3,1.3 7.0,7.7 12.7,1.3" fill="none" stroke="#fff" stroke-width="2.6" stroke-linecap="round" stroke-linejoin="round"/></svg>
<div class="t" style="left:1582px;top:203px;font-size:35px;color:#cfcfcf;font-weight:normal;letter-spacing:0">%</div>
<svg style="left:1643px;top:208px" width="18" height="26" viewBox="0 0 18 26"><circle cx="8" cy="7" r="5.5" fill="#d6d6d6"/><path d="M12,9 Q13,19 3,23" fill="none" stroke="#d6d6d6" stroke-width="3.2"/></svg>
<div class="a" style="left:1691.4px;top:202px;width:2px;height:35px;background:#4f4f4f"></div>
<svg style="left:1716px;top:204px" width="34" height="32" viewBox="0 0 34 32"><path d="M15,6 H2 M6.5,1.5 L2,6 L6.5,10.5" fill="none" stroke="#2a84d2" stroke-width="2"/><text x="17" y="13" font-family="Liberation Sans" font-size="17.5" fill="#d6d6d6">0</text><text x="5" y="30" font-family="Liberation Sans" font-size="17.5" fill="#d6d6d6">.00</text><text x="12" y="13" font-family="Liberation Sans" font-size="17.5" fill="#d6d6d6">.</text></svg>
<svg style="left:1768px;top:204px" width="34" height="32" viewBox="0 0 34 32"><text x="5" y="13" font-family="Liberation Sans" font-size="17.5" fill="#d6d6d6">.00</text><path d="M1,24 H14 M9.5,19.5 L14,24 L9.5,28.5" fill="none" stroke="#2a84d2" stroke-width="2"/><text x="17" y="30" font-family="Liberation Sans" font-size="17.5" fill="#d6d6d6">0</text><text x="12" y="30" font-family="Liberation Sans" font-size="17.5" fill="#d6d6d6">.</text></svg>
<div class="a" style="left:1829.8px;top:122px;width:2px;height:124px;background:#4f4f4f"></div>
<svg style="left:1858px;top:137px" width="58" height="46" viewBox="0 0 58 46"><rect x="1" y="1" width="55" height="43" fill="none" stroke="#c4c4c4" stroke-width="1.8"/><path d="M10,1 V44 M46,1 V44 M1,15 H56 M1,30 H56" stroke="#b4b4b4" stroke-width="1.6"/><rect x="11" y="1.5" width="24.5" height="13" fill="#a52a2a" stroke="#f0862a" stroke-width="1.5"/><rect x="11" y="30" width="28.5" height="13.5" fill="#a52a2a" stroke="#f0862a" stroke-width="1.5"/><rect x="10.5" y="15.8" width="18" height="13.4" fill="#2a7fcf"/></svg>
<svg style="left:1928px;top:155px" width="15" height="11" viewBox="0 0 15 11"><polyline points="1.3,1.3 7.5,8.7 13.7,1.3" fill="none" stroke="#fff" stroke-width="2.6" stroke-linecap="round" stroke-linejoin="round"/></svg>
<div class="t" style="left:1859px;top:205.5px;font-size:18.8px;color:#f2f2f2;font-weight:normal;-webkit-text-stroke:0.6px #f2f2f2;">条件付き</div>
<div class="t" style="left:1878px;top:228px;font-size:18.8px;color:#f2f2f2;font-weight:normal;-webkit-text-stroke:0.6px #f2f2f2;">書式</div>
<svg style="left:1972px;top:137px" width="64" height="56" viewBox="0 0 64 56"><rect x="18" y="15" width="38" height="29" fill="#2a7fcf"/><rect x="1" y="1" width="55" height="43" fill="none" stroke="#bdbdbd" stroke-width="1.8"/><path d="M18,1 V44 M37,1 V44 M1,15 H56 M1,30 H56" stroke="#bdbdbd" stroke-width="1.6"/><path d="M35,42 L57,17" stroke="#d8d8d8" stroke-width="7" stroke-linecap="round"/><path d="M35.5,41.5 L56.5,17.5" stroke="#282828" stroke-width="3.2" stroke-linecap="round"/><path d="M16,52 Q26,51 28,43 Q31,37.5 37,40 Q41,45 36,50 Q30,55.5 16,52 Z" fill="#2a7fcf" stroke="#7cc0f5" stroke-width="1.6"/></svg>
<svg style="left:2042px;top:155px" width="15" height="11" viewBox="0 0 15 11"><polyline points="1.3,1.3 7.5,8.7 13.7,1.3" fill="none" stroke="#fff" stroke-width="2.6" stroke-linecap="round" stroke-linejoin="round"/></svg>
<div class="t" style="left:1965px;top:205.5px;font-size:18.8px;color:#f2f2f2;font-weight:normal;-webkit-text-stroke:0.6px #f2f2f2;">テーブルと</div>
<div class="t" style="left:1956px;top:228px;font-size:18.8px;color:#f2f2f2;font-weight:normal;-webkit-text-stroke:0.6px #f2f2f2;">して書式設定</div>
<svg style="left:2087px;top:137px" width="64" height="56" viewBox="0 0 64 56"><rect x="10" y="8" width="45" height="22" fill="#2a7fcf"/><rect x="1" y="1" width="55" height="43" fill="none" stroke="#bdbdbd" stroke-width="1.8"/><path d="M10,1 V44 M1,8 H56 M1,30 H10" stroke="#bdbdbd" stroke-width="1.6"/><path d="M35,42 L57,17" stroke="#d8d8d8" stroke-width="7" stroke-linecap="round"/><path d="M35.5,41.5 L56.5,17.5" stroke="#282828" stroke-width="3.2" stroke-linecap="round"/><path d="M16,52 Q26,51 28,43 Q31,37.5 37,40 Q41,45 36,50 Q30,55.5 16,52 Z" fill="#2a7fcf" stroke="#7cc0f5" stroke-width="1.6"/></svg>
<svg style="left:2157px;top:155px" width="15" height="11" viewBox="0 0 15 11"><polyline points="1.3,1.3 7.5,8.7 13.7,1.3" fill="none" stroke="#fff" stroke-width="2.6" stroke-linecap="round" stroke-linejoin="round"/></svg>
<div class="t" style="left:2097px;top:204px;font-size:18.8px;color:#f2f2f2;font-weight:normal;-webkit-text-stroke:0.6px #f2f2f2;">セルの</div>
<div class="t" style="left:2088px;top:228px;font-size:18.8px;color:#f2f2f2;font-weight:normal;-webkit-text-stroke:0.6px #f2f2f2;">スタイル</div>
<div class="a" style="left:2196px;top:122px;width:2px;height:123px;background:#4f4f4f"></div>
<svg style="left:2223px;top:129px" width="34" height="30" viewBox="0 0 34 30"><rect x="1" y="1" width="31" height="27" fill="none" stroke="#bdbdbd" stroke-width="1.8"/><path d="M11,1 V28 M22,1 V28 M1,10 H32 M1,19 H32" stroke="#bdbdbd" stroke-width="1.6"/><rect x="11" y="10" width="21" height="9" fill="#2a7fcf" stroke="#9ad0ff" stroke-width="1"/><path d="M12,14.5 H2 M6,10 L1.5,14.5 L6,19" fill="none" stroke="#2a84d2" stroke-width="2"/></svg>
<div class="t" style="left:2268.5px;top:136px;font-size:18.2px;color:#f2f2f2;font-weight:normal;-webkit-text-stroke:0.6px #f2f2f2;">挿入</div>
<svg style="left:2318px;top:139px" width="14" height="11" viewBox="0 0 14 11"><polyline points="1.3,1.3 7.0,8.7 12.7,1.3" fill="none" stroke="#fff" stroke-width="2.6" stroke-linecap="round" stroke-linejoin="round"/></svg>
<svg style="left:2223px;top:173px" width="34" height="30" viewBox="0 0 34 30"><path d="M1,1 H32 M1,28 H32 M1,1 V28 M11,1 V10 M22,1 V10 M11,19 V28 M22,19 V28 M1,10 H32 M1,19 H32" stroke="#bdbdbd" stroke-width="1.7" fill="none"/><rect x="7" y="9" width="13" height="11" fill="#2a7fcf" stroke="#9ad0ff" stroke-width="1"/><path d="M24,10 L32,19 M32,10 L24,19" stroke="#ff5a36" stroke-width="1.8"/></svg>
<div class="t" style="left:2268.5px;top:180.5px;font-size:18.2px;color:#f2f2f2;font-weight:normal;-webkit-text-stroke:0.6px #f2f2f2;">削除</div>
<svg style="left:2318px;top:184px" width="14" height="11" viewBox="0 0 14 11"><polyline points="1.3,1.3 7.0,8.7 12.7,1.3" fill="none" stroke="#fff" stroke-width="2.6" stroke-linecap="round" stroke-linejoin="round"/></svg>
<svg style="left:2223px;top:214px" width="34" height="35" viewBox="0 0 34 35"><path d="M7,2 H26 M7,0 V4 M26,0 V4" stroke="#2a84d2" stroke-width="1.8"/><rect x="1" y="7" width="31" height="27" fill="none" stroke="#bdbdbd" stroke-width="1.8"/><path d="M8,7 V34 M25,7 V34 M1,14 H32 M1,27 H32" stroke="#bdbdbd" stroke-width="1.6"/><rect x="8" y="14" width="17" height="13" fill="#2a7fcf" stroke="#9ad0ff" stroke-width="1"/></svg>
<div class="t" style="left:2268.5px;top:224.5px;font-size:18.2px;color:#f2f2f2;font-weight:normal;-webkit-text-stroke:0.6px #f2f2f2;">書式</div>
<svg style="left:2318px;top:228px" width="14" height="11" viewBox="0 0 14 11"><polyline points="1.3,1.3 7.0,8.7 12.7,1.3" fill="none" stroke="#fff" stroke-width="2.6" stroke-linecap="round" stroke-linejoin="round"/></svg>
<div class="a" style="left:2358px;top:122px;width:2px;height:123px;background:#4f4f4f"></div>
<svg style="left:2388px;top:130px" width="26" height="28" viewBox="0 0 26 28"><path d="M24,2 H2 L13,14 L2,26 H24" fill="none" stroke="#d4d4d4" stroke-width="2"/></svg>
<svg style="left:2428px;top:139px" width="14" height="11" viewBox="0 0 14 11"><polyline points="1.3,1.3 7.0,8.7 12.7,1.3" fill="none" stroke="#fff" stroke-width="2.6" stroke-linecap="round" stroke-linejoin="round"/></svg>
<svg style="left:2384px;top:173px" width="34" height="30" viewBox="0 0 34 30"><rect x="1.5" y="1.5" width="30" height="27" fill="none" stroke="#cfcfcf" stroke-width="1.8"/><path d="M1.5,6 H31.5" stroke="#cfcfcf" stroke-width="1.6"/><path d="M16.5,10 V23 M11,18 L16.5,23.5 L22,18" fill="none" stroke="#2a84d2" stroke-width="2"/></svg>
<svg style="left:2428px;top:183px" width="14" height="11" viewBox="0 0 14 11"><polyline points="1.3,1.3 7.0,8.7 12.7,1.3" fill="none" stroke="#fff" stroke-width="2.6" stroke-linecap="round" stroke-linejoin="round"/></svg>
<svg style="left:2384px;top:216px" width="33" height="33" viewBox="0 0 33 33"><path d="M2,22 L20,4 Q22,2 24,4 L30,10 Q32,12 30,14 L12,32 Q10,33 8,32 L2,26 Q0,24 2,22 Z" fill="none" stroke="#cfcfcf" stroke-width="1.8"/><path d="M3,23 L10,16 L18,24 L11,31 Z" fill="#8a8a8a"/></svg>
<svg style="left:2428px;top:228px" width="14" height="11" viewBox="0 0 14 11"><polyline points="1.3,1.3 7.0,8.7 12.7,1.3" fill="none" stroke="#fff" stroke-width="2.6" stroke-linecap="round" stroke-linejoin="round"/></svg>
<svg style="left:2462px;top:133px" width="58" height="54" viewBox="0 0 58 54"><path d="M2,20 L8.5,1.5 L15,20 M4.5,13 H12.5" fill="none" stroke="#2a84d2" stroke-width="2.2"/><path d="M2,27 H15 L2,50 H16" fill="none" stroke="#d0d0d0" stroke-width="2"/><path d="M24,14 H56 L45,28 V44 H36 V28 Z" fill="none" stroke="#d6d6d6" stroke-width="2"/></svg>
<svg style="left:2533px;top:156px" width="14" height="11" viewBox="0 0 14 11"><polyline points="1.3,1.3 7.0,8.7 12.7,1.3" fill="none" stroke="#fff" stroke-width="2.6" stroke-linecap="round" stroke-linejoin="round"/></svg>
<div class="t" style="left:2455px;top:206.5px;font-size:18.8px;color:#f2f2f2;font-weight:normal;-webkit-text-stroke:0.6px #f2f2f2;">並べ替えと</div>
<div class="t" style="left:2456px;top:228px;font-size:18.8px;color:#f2f2f2;font-weight:normal;-webkit-text-stroke:0.6px #f2f2f2;">フィルター</div>
<svg style="left:2565px;top:131px" width="62" height="61" viewBox="0 0 62 61"><circle cx="37" cy="22" r="20" fill="none" stroke="#d6d6d6" stroke-width="2"/><path d="M23,37 L2,58" stroke="#d6d6d6" stroke-width="2.2"/></svg>
<svg style="left:2637px;top:156px" width="15" height="11" viewBox="0 0 15 11"><polyline points="1.3,1.3 7.5,8.7 13.7,1.3" fill="none" stroke="#fff" stroke-width="2.6" stroke-linecap="round" stroke-linejoin="round"/></svg>
<div class="t" style="left:2578px;top:206.5px;font-size:18.8px;color:#f2f2f2;font-weight:normal;-webkit-text-stroke:0.6px #f2f2f2;">検索と</div>
<div class="t" style="left:2587px;top:228px;font-size:18.8px;color:#f2f2f2;font-weight:normal;-webkit-text-stroke:0.6px #f2f2f2;">選択</div>
<div class="a" style="left:2676px;top:122px;width:2px;height:123px;background:#4f4f4f"></div>
<svg style="left:2701px;top:127px" width="67" height="67" viewBox="0 0 67 67"><rect x="3" y="3" width="59" height="7" fill="#6e6e6e"/><path d="M2,11.3 H64 M2,45.4 H64 M2,29.7 H8 M51,29.7 H64 M22.7,45.4 V64 M43.4,45.4 V64" stroke="#a8a8a8" stroke-width="2.2"/><rect x="1.5" y="1.5" width="62" height="62" fill="none" stroke="#d6d6d6" stroke-width="2.4"/><circle cx="30.6" cy="28.4" r="19.6" fill="#282828" stroke="#dcdcdc" stroke-width="2.4"/><path d="M44.5,42.5 L64,62" stroke="#d8d8d8" stroke-width="3.2"/><rect x="20" y="23" width="7" height="13" fill="#666" stroke="#9a9a9a" stroke-width="1.2"/><rect x="27" y="14" width="8" height="22" fill="#d4d4d4"/><rect x="35" y="19.5" width="6" height="16.5" fill="#2a7fcf" stroke="#8ccaff" stroke-width="1.2"/></svg>
<div class="t" style="left:2705px;top:205.5px;font-size:18.8px;color:#f2f2f2;font-weight:normal;-webkit-text-stroke:0.6px #f2f2f2;">データ</div>
<div class="t" style="left:2705px;top:227.5px;font-size:18.8px;color:#f2f2f2;font-weight:normal;-webkit-text-stroke:0.6px #f2f2f2;">の分析</div>
<div class="t" style="left:2px;top:277px;font-size:25px;color:#ededed;font-weight:normal;">A19</div>
<svg style="left:127px;top:272px" width="17" height="38" viewBox="0 0 17 38"><polygon points="8,1 15.5,13 0.5,13" fill="#a8a8a8"/><polygon points="0.5,25 15.5,25 8,37" fill="#a8a8a8"/></svg>
<div class="a" style="left:150px;top:264px;width:3px;height:52px;border-left:2px dotted #1a1a1a"></div>
<svg style="left:182px;top:280px" width="22" height="22" viewBox="0 0 22 22"><path d="M3,3 L19,19 M19,3 L3,19" stroke="#555" stroke-width="4.2"/></svg>
<svg style="left:237px;top:280px" width="30" height="22" viewBox="0 0 30 22"><path d="M2,10 L11,19 L28,3" fill="none" stroke="#555" stroke-width="4.2"/></svg>
<svg style="left:290px;top:270px" width="42" height="42" viewBox="0 0 42 42"><g fill="none" stroke="#a8a8a8" stroke-linecap="round"><path d="M25.5,8.3 Q23.5,5.5 20,8 Q17.5,10.5 16,19 L13.5,31 Q12,35.5 8.8,33.8" stroke-width="2.8"/><path d="M13.5,14.6 H23.5" stroke-width="2.2"/><path d="M22,21 Q24.5,18.5 26.5,22 L31,30 Q33,33 36,30.5" stroke-width="2.6"/><path d="M36.5,20.5 Q34.5,19 32,22 L27,29.5 Q25,32.5 22.5,30.5" stroke-width="2.6"/></g><circle cx="25.3" cy="8.6" r="2" fill="#a8a8a8"/><circle cx="9" cy="33.5" r="2" fill="#a8a8a8"/></svg>
<svg style="left:2790px;top:285px" width="15" height="13" viewBox="0 0 15 13"><polygon points="0.5,0.5 14,0.5 7.2,12" fill="#bdbdbd"/></svg>
<div class="a" style="left:30px;top:1082px;width:156px;height:46px;border:4px solid #1b7a3e"></div>
<div class="a" style="left:178px;top:1120px;width:10px;height:10px;background:#1b7a3e;border:1px solid #fff"></div>
<div class="a" style="left:0;top:1265px;width:2806px;height:53px;background:#333"></div>
<div class="a" style="left:0;top:1265px;width:2806px;height:2px;background:#6a6a6a"></div>
<div class="a" style="left:0;top:1318px;width:2806px;height:2px;background:#111"></div>
<div class="a" style="left:0;top:1320px;width:2806px;height:10px;background:#484848"></div>
<svg style="left:10px;top:1283px" width="18" height="22" viewBox="0 0 18 22"><polygon points="17,1 17,21 1,11" fill="#6a6a6a"/></svg>
<svg style="left:57px;top:1283px" width="18" height="22" viewBox="0 0 18 22"><polygon points="1,1 1,21 17,11" fill="#6a6a6a"/></svg>
<div class="a" style="left:102px;top:1259px;width:159px;height:52px;background:#fff;border:1.5px solid #7a7a7a;border-top:none;border-radius:0 0 7px 7px"></div>
<div class="t" style="left:141px;top:1279px;font-size:25px;color:#1f7a3e;font-weight:normal;letter-spacing:0px">Sheet1</div>
<svg style="left:288px;top:1281px" width="24" height="23" viewBox="0 0 24 23"><path d="M12,1 V22 M1,11.5 H23" stroke="#a9a9a9" stroke-width="4"/></svg>
<div class="a" style="left:336px;top:1260px;width:1.5px;height:48px;background:#777"></div>
<div class="a" style="left:2174px;top:1316px;width:74px;height:14px;background:#5a5a5a"></div>
<div class="a" style="left:2198px;top:1327px;width:27px;height:6px;border-radius:2px;background:#fff"></div>
<div class="a" style="left:2269px;top:1327px;width:27px;height:6px;border-radius:2px;background:#fff"></div>
<div class="a" style="left:2340px;top:1327px;width:27px;height:6px;border-radius:2px;background:#fff"></div>
<div class="a" style="left:2524px;top:1325px;width:23px;height:23px;border-radius:50%;background:#9a9a9a"></div>
<div class="a" style="left:166px;top:1325px;width:10px;height:10px;border-radius:50%;border:2px solid #eee"></div>
</body></html>
